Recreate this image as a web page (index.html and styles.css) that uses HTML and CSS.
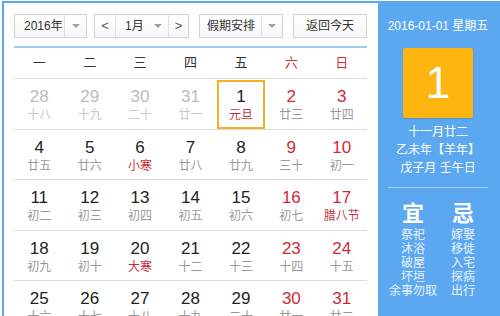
FILE: index.html
```html
<!DOCTYPE html>
<html lang="zh-CN">
<head>
<meta charset="utf-8">
<title>万年历</title>
<link rel="stylesheet" href="styles.css">
</head>
<body>
<div class="cal">
  <div class="main">
    <div class="toolbar">
      <div class="sel sel-year"><span class="sel-text">2016年</span><span class="sel-arrow"><i class="tri"></i></span></div>
      <div class="sel sel-month">
        <span class="nav">&lt;</span>
        <span class="sel-text month-text">1月</span><span class="sel-arrow m-arrow"><i class="tri"></i></span>
        <span class="nav nav-next">&gt;</span>
      </div>
      <div class="sel sel-holiday"><span class="sel-text">假期安排</span><span class="sel-arrow"><i class="tri"></i></span></div>
      <div class="btn">返回今天</div>
    </div>
    <div class="weekdays">
      <span>一</span><span>二</span><span>三</span><span>四</span><span>五</span><span class="red">六</span><span class="red">日</span>
    </div>
    <div class="row">
      <div class="cell other"><b>28</b><em>十八</em></div>
      <div class="cell other"><b>29</b><em>十九</em></div>
      <div class="cell other"><b>30</b><em>二十</em></div>
      <div class="cell other"><b>31</b><em>廿一</em></div>
      <div class="cell selected"><b>1</b><em class="fest">元旦</em></div>
      <div class="cell weekend"><b>2</b><em>廿三</em></div>
      <div class="cell weekend"><b>3</b><em>廿四</em></div>
    </div>
    <div class="row">
      <div class="cell"><b>4</b><em>廿五</em></div>
      <div class="cell"><b>5</b><em>廿六</em></div>
      <div class="cell"><b>6</b><em class="fest">小寒</em></div>
      <div class="cell"><b>7</b><em>廿八</em></div>
      <div class="cell"><b>8</b><em>廿九</em></div>
      <div class="cell weekend"><b>9</b><em>三十</em></div>
      <div class="cell weekend"><b>10</b><em>初一</em></div>
    </div>
    <div class="row">
      <div class="cell"><b>11</b><em>初二</em></div>
      <div class="cell"><b>12</b><em>初三</em></div>
      <div class="cell"><b>13</b><em>初四</em></div>
      <div class="cell"><b>14</b><em>初五</em></div>
      <div class="cell"><b>15</b><em>初六</em></div>
      <div class="cell weekend"><b>16</b><em>初七</em></div>
      <div class="cell weekend"><b>17</b><em class="fest">腊八节</em></div>
    </div>
    <div class="row">
      <div class="cell"><b>18</b><em>初九</em></div>
      <div class="cell"><b>19</b><em>初十</em></div>
      <div class="cell"><b>20</b><em class="fest">大寒</em></div>
      <div class="cell"><b>21</b><em>十二</em></div>
      <div class="cell"><b>22</b><em>十三</em></div>
      <div class="cell weekend"><b>23</b><em>十四</em></div>
      <div class="cell weekend"><b>24</b><em>十五</em></div>
    </div>
    <div class="row">
      <div class="cell"><b>25</b><em>十六</em></div>
      <div class="cell"><b>26</b><em>十七</em></div>
      <div class="cell"><b>27</b><em>十八</em></div>
      <div class="cell"><b>28</b><em>十九</em></div>
      <div class="cell"><b>29</b><em>二十</em></div>
      <div class="cell weekend"><b>30</b><em>廿一</em></div>
      <div class="cell weekend"><b>31</b><em>廿二</em></div>
    </div>
  </div>
  <div class="side">
    <div class="side-date">2016-01-01 星期五</div>
    <div class="big-day">1</div>
    <div class="lunar">
      <div>十一月廿二</div>
      <div>乙未年【羊年】</div>
      <div>戊子月 壬午日</div>
    </div>
    <div class="side-line"></div>
    <div class="yiji">
      <div class="col">
        <div class="yj-title">宜</div>
        <div>祭祀</div>
        <div>沐浴</div>
        <div>破屋</div>
        <div>坏垣</div>
        <div>余事勿取</div>
      </div>
      <div class="col">
        <div class="yj-title">忌</div>
        <div>嫁娶</div>
        <div>移徙</div>
        <div>入宅</div>
        <div>探病</div>
        <div>出行</div>
      </div>
    </div>
  </div>
</div>
</body>
</html>
```

FILE: styles.css
```css
* { box-sizing: border-box; }
html, body { margin: 0; padding: 0; background: #fff; }
body {
  font-family: "Liberation Sans", Arial, "Noto Sans CJK SC", sans-serif;
  color: #333;
  overflow: hidden;
}
.cal {
  display: flex;
  margin: 1px 0 0 2px;
  width: 498px;
  height: 360px;
  border: 2px solid #5ba8f0;
  background: #fff;
}
.main {
  width: 374px;
  padding: 11px 11px 0 10px;
}
.toolbar {
  display: flex;
  height: 34px;
  border-bottom: 2px solid #9ecbf3;
}
.sel, .btn {
  display: flex;
  height: 24px;
  border: 1px solid #d3d3d3;
  background: linear-gradient(#ffffff, #f6f6f6);
  font-size: 12px;
  line-height: 22px;
  color: #333;
}
.sel-text { padding-left: 9px; flex: 1; white-space: nowrap; }
.sel-arrow {
  width: 22px;
  border-left: 1px solid #e0e0e0;
  display: flex;
  align-items: center;
  justify-content: center;
}
.tri {
  display: block;
  width: 0; height: 0;
  border-left: 4px solid transparent;
  border-right: 4px solid transparent;
  border-top: 4px solid #a0a0a0;
}
.sel-year { width: 73px; }
.sel-month { width: 95px; margin-left: 7px; }
.nav {
  width: 21px;
  text-align: center;
  color: #555;
  font-size: 13px;
  border-right: 1px solid #e0e0e0;
}
.nav-next { border-right: none; border-left: 1px solid #e0e0e0; width: 20px; }
.month-text { padding-left: 9px; }
.m-arrow { border-left: none; width: 20px; }
.sel-holiday { width: 84px; margin-left: 10px; }
.sel-holiday .sel-text { padding-left: 7px; }
.sel-holiday .sel-arrow { width: 21px; }
.btn {
  width: 74px;
  margin-left: 10px;
  justify-content: center;
}
.weekdays {
  display: grid;
  grid-template-columns: repeat(7, 1fr);
  height: 31px;
  border-bottom: 1px solid #dcdcdc;
  font-size: 13px;
  line-height: 30px;
  text-align: center;
  color: #333;
}
.red { color: #c8313b; }
.row {
  display: grid;
  grid-template-columns: repeat(7, 1fr);
  height: 50.5px;
  border-bottom: 1px solid #dcdcdc;
}
.cell {
  text-align: center;
  padding-top: 8px;
}
.cell b {
  display: block;
  font-weight: normal;
  font-size: 17px;
  line-height: 20px;
  color: #222;
}
.cell em {
  display: block;
  font-style: normal;
  font-size: 12px;
  line-height: 16px;
  color: #999;
}
.cell.other b { color: #bbb; }
.cell.other em { color: #c8c8c8; }
.cell.weekend b { color: #cc2b36; }
.cell em.fest { color: #c8313b; }
.cell.selected {
  margin: 1px 1px 0 1px;
  border: 2px solid #f2b127;
  padding-top: 5px;
}
.side {
  width: 120px;
  background: #5ba8f0;
  color: #fff;
  padding-top: 14px;
  text-align: center;
}
.side-date {
  font-size: 12px;
  line-height: 18px;
  white-space: nowrap;
}
.big-day {
  width: 70px;
  height: 70px;
  margin: 13px auto 0;
  background: #ffb50f;
  border-radius: 2px;
  font-size: 44px;
  line-height: 70px;
  color: #fff;
  box-shadow: 0 1px 2px rgba(0,0,0,0.15);
}
.lunar {
  margin-top: 5px;
  font-size: 12px;
  line-height: 18px;
}
.side-line {
  margin: 10px 10px 0;
  height: 1px;
  background: rgba(255,255,255,0.45);
}
.yiji {
  display: flex;
  padding: 0 10px;
  margin-top: 13px;
  font-size: 12px;
  line-height: 14px;
  color: #eaf3ff;
}
.col { width: 50px; white-space: nowrap; }
.yj-title {
  font-size: 22px;
  line-height: 26px;
  margin-bottom: 1px;
  font-weight: bold;
  color: #fff;
}
```
